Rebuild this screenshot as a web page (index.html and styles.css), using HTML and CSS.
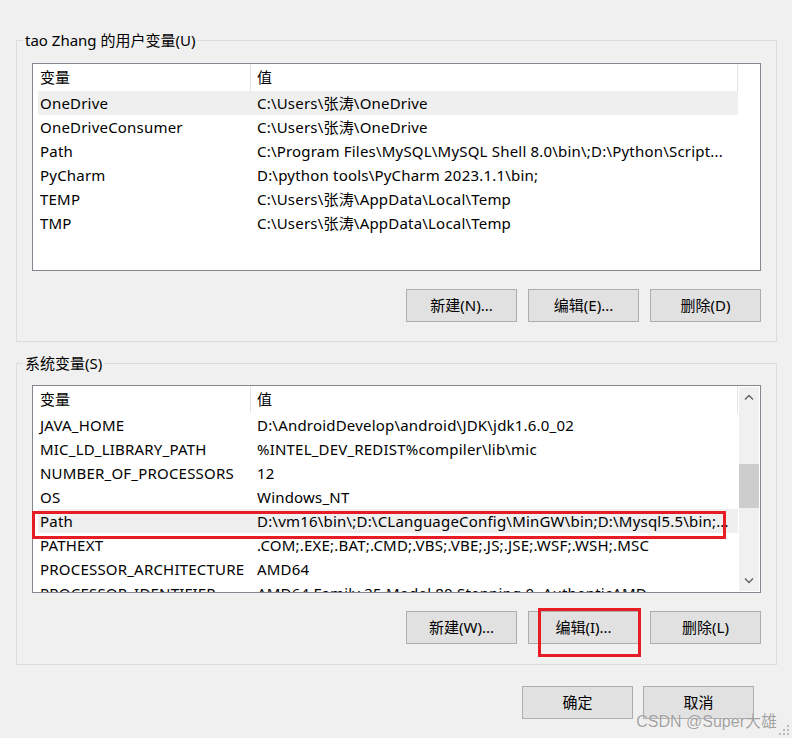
FILE: index.html
```html
<!DOCTYPE html>
<html lang="zh-CN">
<head>
    <meta charset="UTF-8">
    <title>环境变量</title>
    <link rel="stylesheet" href="styles.css">
</head>
<body>
    <div class="dialog">
        <!-- 用户变量 -->
        <fieldset class="group group-user">
            <legend>tao Zhang 的用户变量(U)</legend>
            <div class="group-body">
                <div class="list">
                    <div class="cols">
                        <div class="list-head">
                            <span class="hcell name">变量</span><span class="hcell value">值</span>
                        </div>
                        <div class="row selected"><span class="name">OneDrive</span><span class="value">C:\Users\张涛\OneDrive</span></div>
                        <div class="row"><span class="name">OneDriveConsumer</span><span class="value">C:\Users\张涛\OneDrive</span></div>
                        <div class="row"><span class="name">Path</span><span class="value">C:\Program Files\MySQL\MySQL Shell 8.0\bin\;D:\Python\Script...</span></div>
                        <div class="row"><span class="name">PyCharm</span><span class="value">D:\python tools\PyCharm 2023.1.1\bin;</span></div>
                        <div class="row"><span class="name">TEMP</span><span class="value">C:\Users\张涛\AppData\Local\Temp</span></div>
                        <div class="row"><span class="name">TMP</span><span class="value">C:\Users\张涛\AppData\Local\Temp</span></div>
                    </div>
                </div>
                <div class="buttons">
                    <button class="btn">新建(N)...</button>
                    <button class="btn">编辑(E)...</button>
                    <button class="btn">删除(D)</button>
                </div>
            </div>
        </fieldset>

        <!-- 系统变量 -->
        <fieldset class="group group-sys">
            <legend>系统变量(S)</legend>
            <div class="group-body">
                <div class="list">
                    <div class="cols">
                        <div class="list-head">
                            <span class="hcell name">变量</span><span class="hcell value">值</span>
                        </div>
                        <div class="row"><span class="name">JAVA_HOME</span><span class="value">D:\AndroidDevelop\android\JDK\jdk1.6.0_02</span></div>
                        <div class="row"><span class="name">MIC_LD_LIBRARY_PATH</span><span class="value">%INTEL_DEV_REDIST%compiler\lib\mic</span></div>
                        <div class="row"><span class="name">NUMBER_OF_PROCESSORS</span><span class="value">12</span></div>
                        <div class="row"><span class="name">OS</span><span class="value">Windows_NT</span></div>
                        <div class="row selected"><span class="name">Path</span><span class="value">D:\vm16\bin\;D:\CLanguageConfig\MinGW\bin;D:\Mysql5.5\bin;...</span></div>
                        <div class="row"><span class="name">PATHEXT</span><span class="value">.COM;.EXE;.BAT;.CMD;.VBS;.VBE;.JS;.JSE;.WSF;.WSH;.MSC</span></div>
                        <div class="row"><span class="name">PROCESSOR_ARCHITECTURE</span><span class="value">AMD64</span></div>
                        <div class="row"><span class="name">PROCESSOR_IDENTIFIER</span><span class="value">AMD64 Family 25 Model 80 Stepping 0, AuthenticAMD</span></div>
                    </div>
                    <div class="scrollbar">
                        <div class="sb-arrow">
                            <svg width="10" height="6" viewBox="0 0 10 6"><polyline points="1,5.5 5,1.5 9,5.5" fill="none" stroke="#606060" stroke-width="1.4"/></svg>
                        </div>
                        <div class="sb-track"><div class="sb-thumb"></div></div>
                        <div class="sb-arrow">
                            <svg width="10" height="6" viewBox="0 0 10 6"><polyline points="1,0.5 5,4.5 9,0.5" fill="none" stroke="#606060" stroke-width="1.4"/></svg>
                        </div>
                    </div>
                </div>
                <div class="buttons">
                    <button class="btn">新建(W)...</button>
                    <button class="btn">编辑(I)...</button>
                    <button class="btn">删除(L)</button>
                </div>
                <!-- 截图上的红框标注 -->
                <div class="mark mark-row"></div>
                <div class="mark mark-btn"></div>
            </div>
        </fieldset>

        <div class="footer">
            <button class="btn">确定</button>
            <button class="btn">取消</button>
        </div>
    </div>

    <div class="watermark">CSDN @Super大雄</div>
    <svg class="grip" width="12" height="12" viewBox="0 0 12 12">
        <rect x="8" y="0" width="2" height="2"/>
        <rect x="4" y="4" width="2" height="2"/>
        <rect x="8" y="4" width="2" height="2"/>
        <rect x="0" y="8" width="2" height="2"/>
        <rect x="4" y="8" width="2" height="2"/>
        <rect x="8" y="8" width="2" height="2"/>
    </svg>
</body>
</html>
```

FILE: styles.css
```css
* {
    box-sizing: border-box;
}
html, body {
    margin: 0;
    padding: 0;
}
body {
    position: relative;
    width: 792px;
    height: 738px;
    overflow: hidden;
    background: #f0f0f0;
    color: #000;
    font-family: "Noto Sans", "Noto Sans CJK SC", sans-serif;
    font-size: 15px;
}

/* 分组框 */
.group {
    margin: 0 15px 0 16px;
    padding: 0;
    min-width: 0;
    border: 1px solid #dcdcdc;
}
.group-user {
    margin-top: 30px;
}
.group-sys {
    margin-top: 11px;
}
.group legend {
    margin-left: 6px;
    padding: 0 2px;
    height: 20px;
    line-height: 20px;
}
.group-body {
    position: relative;
    padding: 13px 15px 19px;
}
.group-sys .group-body {
    padding-top: 12px;
    padding-bottom: 20px;
}

/* 列表 */
.list {
    display: flex;
    height: 208px;
    border: 1px solid #828790;
    background: #fff;
    overflow: hidden;
}
.cols {
    flex: none;
    width: 705px;
}
.list-head {
    display: flex;
    height: 27px;
    line-height: 27px;
}
.hcell {
    border-right: 1px solid #e5e5e5;
}
.hcell.name {
    width: 218px;
    padding-left: 7px;
}
.hcell.value {
    flex: 1;
    padding-left: 6px;
}
.row {
    display: flex;
    height: 24px;
    margin-left: 5px;
    line-height: 24px;
    letter-spacing: .2px;
    white-space: nowrap;
}
.row.selected {
    background: #efefef;
}
.row .name {
    flex: none;
    width: 219px;
    padding-left: 2px;
    overflow: hidden;
}
.row .value {
    flex: 1;
    min-width: 0;
    overflow: hidden;
    text-overflow: ellipsis;
}

/* 滚动条 */
.scrollbar {
    display: flex;
    flex-direction: column;
    width: 20px;
    margin: 1px 1px 1px auto;
    background: #f0f0f0;
}
.sb-arrow {
    display: flex;
    height: 20px;
    align-items: center;
    justify-content: center;
}
.sb-arrow svg {
    display: block;
}
.sb-track {
    flex: 1;
}
.sb-thumb {
    height: 44px;
    margin-top: 57px;
    background: #cdcdcd;
}

/* 按钮 */
.buttons {
    display: flex;
    justify-content: flex-end;
    gap: 11px;
    margin-top: 18px;
}
.btn {
    width: 111px;
    height: 33px;
    padding: 0;
    border: 1px solid #adadad;
    background: #e1e1e1;
    color: #000;
    font: inherit;
    line-height: 31px;
}
.footer {
    display: flex;
    justify-content: flex-end;
    gap: 10px;
    margin-top: 21px;
    padding-right: 38px;
}

/* 红框标注 */
.mark {
    position: absolute;
    border: 3px solid #e81c24;
    pointer-events: none;
}
.mark-row {
    left: 15px;
    top: 138px;
    width: 694px;
    height: 28px;
}
.mark-btn {
    left: 521px;
    top: 235px;
    width: 103px;
    height: 49px;
}

/* 水印 */
.watermark {
    position: absolute;
    right: 15px;
    top: 714px;
    color: rgba(120, 120, 120, .7);
    font-family: "Liberation Sans", "Noto Sans CJK SC", sans-serif;
    font-size: 16px;
    line-height: 16px;
    text-shadow: 0 0 1px #fff;
}
.grip {
    position: absolute;
    right: 1px;
    bottom: 1px;
    fill: #bcbcbc;
}
```
